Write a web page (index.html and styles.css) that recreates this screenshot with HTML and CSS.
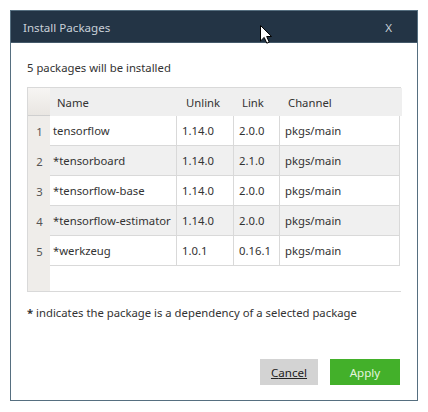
FILE: index.html
```html
<!DOCTYPE html>
<html>
<head>
<meta charset="utf-8">
<link rel="stylesheet" href="styles.css">
</head>
<body>
<div class="dialog">
  <div class="titlebar">
    <span class="title">Install Packages</span>
    <span class="close">X</span>
  </div>
  <div class="content">
    <p class="summary">5 packages will be installed</p>
    <div class="grid">
      <div class="corner"></div>
      <div class="hcell">Name</div>
      <div class="hcell">Unlink</div>
      <div class="hcell">Link</div>
      <div class="hcell">Channel</div>
      <div class="hend"></div>

      <div class="num">1</div>
      <div class="cell">tensorflow</div>
      <div class="cell">1.14.0</div>
      <div class="cell">2.0.0</div>
      <div class="cell">pkgs/main</div>
      <div class="end"></div>

      <div class="num">2</div>
      <div class="cell alt">*tensorboard</div>
      <div class="cell alt">1.14.0</div>
      <div class="cell alt">2.1.0</div>
      <div class="cell alt">pkgs/main</div>
      <div class="end"></div>

      <div class="num">3</div>
      <div class="cell">*tensorflow-base</div>
      <div class="cell">1.14.0</div>
      <div class="cell">2.0.0</div>
      <div class="cell">pkgs/main</div>
      <div class="end"></div>

      <div class="num">4</div>
      <div class="cell alt">*tensorflow-estimator</div>
      <div class="cell alt">1.14.0</div>
      <div class="cell alt">2.0.0</div>
      <div class="cell alt">pkgs/main</div>
      <div class="end"></div>

      <div class="num">5</div>
      <div class="cell">*werkzeug</div>
      <div class="cell">1.0.1</div>
      <div class="cell">0.16.1</div>
      <div class="cell">pkgs/main</div>
      <div class="end"></div>

      <div class="numfill"></div>
      <div class="fill"></div>
    </div>
    <p class="note"><b>*</b> indicates the package is a dependency of a selected package</p>
    <div class="buttons">
      <button class="btn cancel"><u>C</u>ancel</button>
      <button class="btn apply">Apply</button>
    </div>
  </div>
</div>
<svg class="cursor" width="13" height="19" viewBox="0 0 13 19">
  <path d="M0.5 0.5 L0.5 16 L4.2 12.4 L6.8 18.2 L9.2 17.1 L6.7 11.5 L11.6 11.5 Z" fill="#fff" stroke="#000" stroke-width="1" stroke-linejoin="miter"/>
</svg>
</body>
</html>
```
FILE: styles.css
```css
* { box-sizing: border-box; }
html, body { margin: 0; padding: 0; background: #fff; }
body {
  padding: 10px;
  font-family: "Noto Sans", "DejaVu Sans", sans-serif;
  font-size: 11.3px;
  color: #333;
}
.dialog {
  width: 408px;
  height: 391px;
  border: 1px solid #566f80;
  display: flex;
  flex-direction: column;
  background: #fff;
}
.titlebar {
  height: 32px;
  background: #233445;
  border-bottom: 1px solid #44596a;
  color: #c8d0d8;
  display: flex;
  align-items: center;
  justify-content: space-between;
  padding: 1px 25px 0 12px;
  font-size: 11.6px;
}
.content {
  flex: 1;
  display: flex;
  flex-direction: column;
  padding: 0 16px 15px 16px;
}
.summary {
  margin: 16px 0 0 0;
  height: 18px;
  line-height: 18px;
}
.grid {
  margin-top: 10px;
  width: 374px;
  border: 1px solid #d9d9d9;
  display: grid;
  grid-template-columns: 22px 127px 57px 46px 120px 2px;
  grid-template-rows: 28px repeat(5, 30px) 25px;
  background: #fff;
}
.corner {
  background: linear-gradient(to bottom, #f7f5f3, #e9e6e2);
  border-bottom: 1px solid #cfcfcf;
}
.hcell {
  background: #efefef;
  padding-left: 7px;
  padding-top: 1px;
  line-height: 27px;
}
.hcell:nth-child(3) { padding-left: 9px; }
.hcell:nth-child(4), .hcell:nth-child(5) { padding-left: 8px; }
.hend { background: #efefef; }
.num {
  background: #efedea;
  color: #555;
  text-align: center;
  padding-top: 1px;
  line-height: 29px;
  padding-left: 1px;
}
.cell {
  border-bottom: 1px solid #d9d9d9;
  border-right: 1px solid #d9d9d9;
  padding-top: 1px;
  line-height: 28px;
  padding-left: 5px;
  white-space: nowrap;
  overflow: hidden;
  background: #fff;
}
.cell.alt { background: #f0f0f0; }
.num + .cell { padding-left: 3px; }
.end { background: #fff; }
.numfill { background: #efedea; }
.fill { grid-column: 2 / 7; background: #fff; }
.note {
  margin: 12px 0 0 0;
  line-height: 18px;
}
.note b { font-weight: bold; }
.buttons {
  margin-top: auto;
  display: flex;
  justify-content: flex-end;
  gap: 12px;
  padding-right: 1px;
}
.btn {
  font-family: inherit;
  font-size: 11.6px;
  height: 26px;
  border: none;
  padding: 0;
  cursor: default;
}
.cancel {
  width: 58px;
  background: #d3d3d3;
  color: #222;
  text-decoration: underline;
}
.cancel u { text-decoration: none; }
.apply {
  width: 70px;
  background: #43b02a;
  color: #e6f4df;
}
.cursor {
  position: absolute;
  left: 260px;
  top: 25px;
}
```
